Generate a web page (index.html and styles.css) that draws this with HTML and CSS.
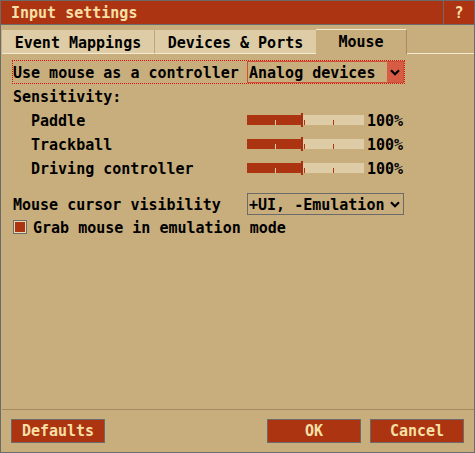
FILE: index.html
```html
<!DOCTYPE html>
<html>
<head>
<meta charset="utf-8">
<title>Input settings</title>
<link rel="stylesheet" href="styles.css">
</head>
<body>
<div class="dialog">
  <div class="titlebar">
    <div class="title">Input settings</div>
    <div class="help">?</div>
  </div>
  <div class="tabs">
    <div class="tab tab1">Event Mappings</div>
    <div class="tab tab2">Devices &amp; Ports</div>
    <div class="tab active">Mouse</div>
    <div class="tabfill"></div>
  </div>
  <div class="content">
    <div class="focusrow">
      <div class="lbl">Use mouse as a controller</div>
      <div class="popup focused">
        <div class="popup-text">Analog devices</div>
        <div class="popup-arrow"><svg width="10" height="7" viewBox="0 0 10 7"><path d="M1 1.2 L5 5.2 L9 1.2" fill="none" stroke="#000" stroke-width="2.2"/></svg></div>
      </div>
    </div>
    <div class="heading">Sensitivity:</div>
    <div class="srow">
      <div class="slbl">Paddle</div>
      <div class="slider"><div class="track"><div class="fill" style="width:54px"></div><span class="tick lt" style="left:28px"></span><span class="tick" style="left:57px"></span><span class="tick" style="left:86px"></span><span class="handle" style="left:54px"></span></div></div>
      <div class="val">100%</div>
    </div>
    <div class="srow">
      <div class="slbl">Trackball</div>
      <div class="slider"><div class="track"><div class="fill" style="width:54px"></div><span class="tick lt" style="left:28px"></span><span class="tick" style="left:57px"></span><span class="tick" style="left:86px"></span><span class="handle" style="left:54px"></span></div></div>
      <div class="val">100%</div>
    </div>
    <div class="srow">
      <div class="slbl">Driving controller</div>
      <div class="slider"><div class="track"><div class="fill" style="width:54px"></div><span class="tick lt" style="left:28px"></span><span class="tick" style="left:57px"></span><span class="tick" style="left:86px"></span><span class="handle" style="left:54px"></span></div></div>
      <div class="val">100%</div>
    </div>
    <div class="prow">
      <div class="plbl">Mouse cursor visibility</div>
      <div class="popup">
        <div class="popup-text">+UI, -Emulation</div>
        <div class="popup-arrow"><svg width="10" height="7" viewBox="0 0 10 7"><path d="M1 1.2 L5 5.2 L9 1.2" fill="none" stroke="#000" stroke-width="2.2"/></svg></div>
      </div>
    </div>
    <div class="crow">
      <div class="checkbox"></div>
      <div class="clbl">Grab mouse in emulation mode</div>
    </div>
  </div>
  <div class="footer">
    <div class="btn">Defaults</div>
    <div class="btngroup">
      <div class="btn">OK</div>
      <div class="btn">Cancel</div>
    </div>
  </div>
</div>
</body>
</html>
```
FILE: styles.css
```css
* { box-sizing: border-box; }
body { margin: 0; background: #c8ae7d; }
.dialog {
  width: 475px; height: 453px;
  border: 1px solid #6b6b6b;
  background: #c8ae7d;
  display: flex; flex-direction: column;
  font: bold 15px/18px "DejaVu Sans Mono", monospace;
  color: #000;
  white-space: nowrap;
}
.titlebar {
  display: flex; height: 24px; flex: none;
  background: #ad3412;
  border-bottom: 1px solid #6b6b6b;
  color: #f7e0a6;
}
.title { flex: 1; padding: 3px 0 0 10px; }
.help { width: 31px; border-left: 1px solid #6b6b6b; text-align: center; padding-top: 3px; }
.tabs { display: flex; flex: none; align-items: flex-end; height: 29px; padding-left: 1px; }
.tab {
  height: 24px; padding-top: 4px;
  background: #ddcca5;
  border-bottom: 1px solid #f4ecd0;
  text-align: center;
}
.tab1 { width: 153px; border-right: 1px solid #bfa679; }
.tab2 { width: 161px; }
.tab.active {
  width: 91px; height: 25px; padding-top: 3px;
  background: transparent;
  border-top: 1px solid #f4ecd0;
  border-right: 1px solid #a58c62;
  border-bottom: none;
}
.tabfill { flex: 1; height: 1px; background: #f4ecd0; }
.content { flex: 1; padding: 6px 0 0 11px; }
.focusrow { display: flex; width: 393px; height: 24px; border: 1px dotted #e01010; }
.lbl { width: 234px; padding-top: 3px; }
.popup { display: flex; width: 157px; height: 22px; border: 1px solid #6b6b6b; }
.popup.focused { border-color: #cc5038; }
.popup-text { flex: 1; padding: 2px 0 0 1px; }
.popup-arrow { width: 16px; display: flex; align-items: center; justify-content: center; }
.popup.focused .popup-arrow { background: #d65c44; }
.heading { height: 24px; margin-top: 1px; padding: 3px 0 0 1px; }
.srow { display: flex; height: 24px; }
.slbl { width: 235px; padding: 3px 0 0 19px; }
.slider { width: 117px; height: 24px; }
.track { position: relative; margin-top: 6px; height: 10px; background: #ddcca5; }
.fill { height: 10px; background: #ac3410; }
.tick { position: absolute; top: 5px; width: 1px; height: 5px; background: #ac3410; }
.tick.lt { background: #ddcca5; }
.handle { position: absolute; top: -2px; width: 2px; height: 14px; background: #a52f0e; }
.val { margin-left: 3px; padding-top: 3px; }
.prow { display: flex; height: 22px; margin-top: 12px; }
.plbl { width: 235px; padding: 3px 0 0 1px; }
.crow { display: flex; height: 24px; margin-top: 1px; padding-left: 1px; }
.checkbox {
  width: 14px; height: 14px; margin-top: 4px;
  border: 1px solid #6b6b6b;
  background: #ac3410;
  box-shadow: inset 0 0 0 1px #e8d8b0;
}
.clbl { margin-left: 6px; padding-top: 3px; }
.footer {
  display: flex; flex: none; justify-content: space-between;
  margin-left: 1px;
  border-top: 1px solid #a48a5e;
  padding: 9px 10px 9px 9px;
  height: 43px;
}
.btngroup { display: flex; gap: 9px; }
.btn {
  width: 94px; height: 24px;
  border: 1px solid #6b6b6b;
  background: #ac3410;
  color: #f7e0a6;
  text-align: center;
  padding-top: 2px;
}
```
